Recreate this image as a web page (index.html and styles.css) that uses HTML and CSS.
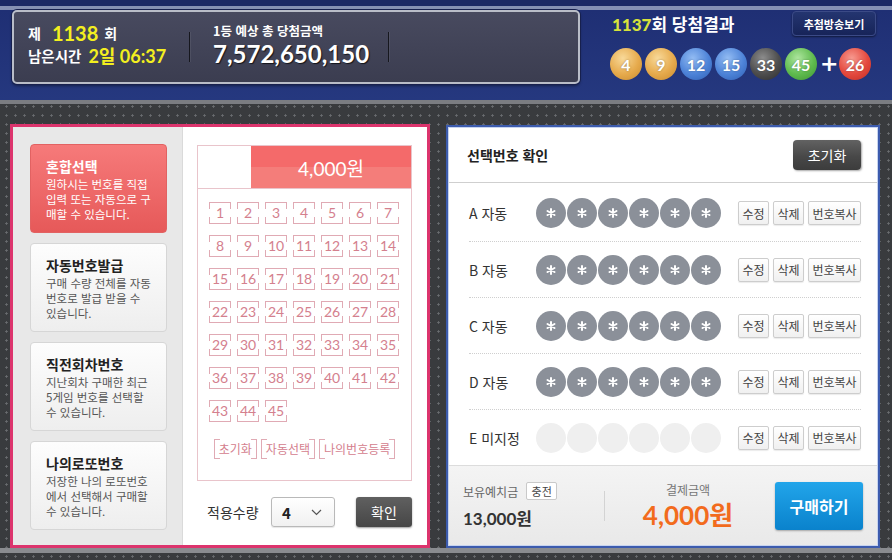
FILE: index.html
```html
<!DOCTYPE html>
<html lang="ko">
<head>
<meta charset="utf-8">
<title>로또 구매</title>
<link rel="stylesheet" href="styles.css">
</head>
<body>
<header class="top">
  <div class="info">
    <div class="ib-left">
      <div class="l1"><span>제</span><span class="num n1">1138</span><span>회</span></div>
      <div class="l2"><span>남은시간</span><span class="num n2">2일 06:37</span></div>
    </div>
    <div class="vline"></div>
    <div class="prize">
      <div class="lab">1등 예상 총 당첨금액</div>
      <div class="amt">7,572,650,150</div>
    </div>
    <div class="vline"></div>
  </div>
  <div class="res">
    <div class="res-head">
      <div class="res-title"><b>1137</b>회 당첨결과</div>
      <div class="live-btn">추첨방송보기</div>
    </div>
    <div class="balls">
      <span class="ball y">4</span>
      <span class="ball y">9</span>
      <span class="ball b">12</span>
      <span class="ball b">15</span>
      <span class="ball g">33</span>
      <span class="ball gr">45</span>
      <span class="plus">+</span>
      <span class="ball r">26</span>
    </div>
  </div>
</header>

<main class="main">
  <section class="lp">
    <div class="menu">
      <div class="mi on"><h3>혼합선택</h3><p>원하시는 번호를 직접<br>입력 또는 자동으로 구<br>매할 수 있습니다.</p></div>
      <div class="mi"><h3>자동번호발급</h3><p>구매 수량 전체를 자동<br>번호로 발급 받을 수<br>있습니다.</p></div>
      <div class="mi"><h3>직전회차번호</h3><p>지난회차 구매한 최근<br>5게임 번호를 선택할<br>수 있습니다.</p></div>
      <div class="mi"><h3>나의로또번호</h3><p>저장한 나의 로또번호<br>에서 선택해서 구매할<br>수 있습니다.</p></div>
    </div>
    <div class="pick">
      <div class="grid-box">
        <div class="gb-head"><div class="gb-blank"></div><div class="gb-price">4,000원</div></div>
        <div class="nums">
          <span class="n">1</span><span class="n">2</span><span class="n">3</span><span class="n">4</span><span class="n">5</span><span class="n">6</span><span class="n">7</span>
          <span class="n">8</span><span class="n">9</span><span class="n">10</span><span class="n">11</span><span class="n">12</span><span class="n">13</span><span class="n">14</span>
          <span class="n">15</span><span class="n">16</span><span class="n">17</span><span class="n">18</span><span class="n">19</span><span class="n">20</span><span class="n">21</span>
          <span class="n">22</span><span class="n">23</span><span class="n">24</span><span class="n">25</span><span class="n">26</span><span class="n">27</span><span class="n">28</span>
          <span class="n">29</span><span class="n">30</span><span class="n">31</span><span class="n">32</span><span class="n">33</span><span class="n">34</span><span class="n">35</span>
          <span class="n">36</span><span class="n">37</span><span class="n">38</span><span class="n">39</span><span class="n">40</span><span class="n">41</span><span class="n">42</span>
          <span class="n">43</span><span class="n">44</span><span class="n">45</span>
        </div>
        <div class="gb-btns"><span>초기화</span><span>자동선택</span><span>나의번호등록</span></div>
      </div>
      <div class="qty">
        <span class="qty-lbl">적용수량</span>
        <div class="sel"><span>4</span><svg width="11" height="7" viewBox="0 0 11 7"><path d="M1 1l4.5 4.5L10 1" fill="none" stroke="#555" stroke-width="1.2"/></svg></div>
        <div class="ok">확인</div>
      </div>
    </div>
  </section>

  <section class="rp">
    <div class="rp-in">
      <div class="rp-head">
        <h2>선택번호 확인</h2>
        <div class="reset">초기화</div>
      </div>
      <div class="rows">
        <div class="row"><span class="lbl">A 자동</span><div class="circles"><span class="c"><svg class="st" viewBox="0 0 12 12"><path d="M6 1.2v9.6M1.8 3.6l8.4 4.8M1.8 8.4l8.4-4.8"/></svg></span><span class="c"><svg class="st" viewBox="0 0 12 12"><path d="M6 1.2v9.6M1.8 3.6l8.4 4.8M1.8 8.4l8.4-4.8"/></svg></span><span class="c"><svg class="st" viewBox="0 0 12 12"><path d="M6 1.2v9.6M1.8 3.6l8.4 4.8M1.8 8.4l8.4-4.8"/></svg></span><span class="c"><svg class="st" viewBox="0 0 12 12"><path d="M6 1.2v9.6M1.8 3.6l8.4 4.8M1.8 8.4l8.4-4.8"/></svg></span><span class="c"><svg class="st" viewBox="0 0 12 12"><path d="M6 1.2v9.6M1.8 3.6l8.4 4.8M1.8 8.4l8.4-4.8"/></svg></span><span class="c"><svg class="st" viewBox="0 0 12 12"><path d="M6 1.2v9.6M1.8 3.6l8.4 4.8M1.8 8.4l8.4-4.8"/></svg></span></div><div class="acts"><span class="a1">수정</span><span class="a1">삭제</span><span class="a2">번호복사</span></div></div>
        <div class="row"><span class="lbl">B 자동</span><div class="circles"><span class="c"><svg class="st" viewBox="0 0 12 12"><path d="M6 1.2v9.6M1.8 3.6l8.4 4.8M1.8 8.4l8.4-4.8"/></svg></span><span class="c"><svg class="st" viewBox="0 0 12 12"><path d="M6 1.2v9.6M1.8 3.6l8.4 4.8M1.8 8.4l8.4-4.8"/></svg></span><span class="c"><svg class="st" viewBox="0 0 12 12"><path d="M6 1.2v9.6M1.8 3.6l8.4 4.8M1.8 8.4l8.4-4.8"/></svg></span><span class="c"><svg class="st" viewBox="0 0 12 12"><path d="M6 1.2v9.6M1.8 3.6l8.4 4.8M1.8 8.4l8.4-4.8"/></svg></span><span class="c"><svg class="st" viewBox="0 0 12 12"><path d="M6 1.2v9.6M1.8 3.6l8.4 4.8M1.8 8.4l8.4-4.8"/></svg></span><span class="c"><svg class="st" viewBox="0 0 12 12"><path d="M6 1.2v9.6M1.8 3.6l8.4 4.8M1.8 8.4l8.4-4.8"/></svg></span></div><div class="acts"><span class="a1">수정</span><span class="a1">삭제</span><span class="a2">번호복사</span></div></div>
        <div class="row"><span class="lbl">C 자동</span><div class="circles"><span class="c"><svg class="st" viewBox="0 0 12 12"><path d="M6 1.2v9.6M1.8 3.6l8.4 4.8M1.8 8.4l8.4-4.8"/></svg></span><span class="c"><svg class="st" viewBox="0 0 12 12"><path d="M6 1.2v9.6M1.8 3.6l8.4 4.8M1.8 8.4l8.4-4.8"/></svg></span><span class="c"><svg class="st" viewBox="0 0 12 12"><path d="M6 1.2v9.6M1.8 3.6l8.4 4.8M1.8 8.4l8.4-4.8"/></svg></span><span class="c"><svg class="st" viewBox="0 0 12 12"><path d="M6 1.2v9.6M1.8 3.6l8.4 4.8M1.8 8.4l8.4-4.8"/></svg></span><span class="c"><svg class="st" viewBox="0 0 12 12"><path d="M6 1.2v9.6M1.8 3.6l8.4 4.8M1.8 8.4l8.4-4.8"/></svg></span><span class="c"><svg class="st" viewBox="0 0 12 12"><path d="M6 1.2v9.6M1.8 3.6l8.4 4.8M1.8 8.4l8.4-4.8"/></svg></span></div><div class="acts"><span class="a1">수정</span><span class="a1">삭제</span><span class="a2">번호복사</span></div></div>
        <div class="row"><span class="lbl">D 자동</span><div class="circles"><span class="c"><svg class="st" viewBox="0 0 12 12"><path d="M6 1.2v9.6M1.8 3.6l8.4 4.8M1.8 8.4l8.4-4.8"/></svg></span><span class="c"><svg class="st" viewBox="0 0 12 12"><path d="M6 1.2v9.6M1.8 3.6l8.4 4.8M1.8 8.4l8.4-4.8"/></svg></span><span class="c"><svg class="st" viewBox="0 0 12 12"><path d="M6 1.2v9.6M1.8 3.6l8.4 4.8M1.8 8.4l8.4-4.8"/></svg></span><span class="c"><svg class="st" viewBox="0 0 12 12"><path d="M6 1.2v9.6M1.8 3.6l8.4 4.8M1.8 8.4l8.4-4.8"/></svg></span><span class="c"><svg class="st" viewBox="0 0 12 12"><path d="M6 1.2v9.6M1.8 3.6l8.4 4.8M1.8 8.4l8.4-4.8"/></svg></span><span class="c"><svg class="st" viewBox="0 0 12 12"><path d="M6 1.2v9.6M1.8 3.6l8.4 4.8M1.8 8.4l8.4-4.8"/></svg></span></div><div class="acts"><span class="a1">수정</span><span class="a1">삭제</span><span class="a2">번호복사</span></div></div>
        <div class="row"><span class="lbl">E 미지정</span><div class="circles"><span class="c empty"></span><span class="c empty"></span><span class="c empty"></span><span class="c empty"></span><span class="c empty"></span><span class="c empty"></span></div><div class="acts"><span class="a1">수정</span><span class="a1">삭제</span><span class="a2">번호복사</span></div></div>
      </div>
      <div class="rp-foot">
        <div class="hold">
          <div class="hold-top"><span>보유예치금</span><span class="charge">충전</span></div>
          <div class="hold-amt">13,000원</div>
        </div>
        <div class="fdiv"></div>
        <div class="pay">
          <div class="pay-lbl">결제금액</div>
          <div class="pay-amt">4,000원</div>
        </div>
        <div class="buy">구매하기</div>
      </div>
    </div>
  </section>
</main>
<div class="band"></div>
</body>
</html>
```

FILE: styles.css
```css
* { box-sizing: border-box; margin: 0; padding: 0; }
body {
  width: 892px; height: 560px; overflow: hidden;
  font-family: "Noto Sans CJK KR", "Noto Sans", sans-serif;
  background-color: #393b3e;
  background-image: radial-gradient(circle, #6a6c70 0 0.9px, transparent 1.4px);
  background-size: 9px 9px;
  background-position: 2px 3px;
}

/* header */
.top {
  height: 104px;
  display: flex; align-items: flex-start;
  background: linear-gradient(#1b2864 0, #1b2864 6px, #8590b3 6px, #8590b3 10px, #1f2f74 10px, #25387f 100%);
  border-bottom: 4px solid #7b7d82;
}
.info {
  margin: 10px 0 0 12px;
  width: 568px; height: 74px;
  border: 2px solid #b9bdc8; border-radius: 5px;
  background: linear-gradient(#484a5f, #3b3d50);
  box-shadow: 0 0 0 1px #17204e, 0 2px 3px rgba(0,0,0,.4);
  display: flex; align-items: center;
}
.ib-left { width: 175px; padding-left: 14px; padding-bottom: 6px; color: #fff; font-weight: 700; }
.l1, .l2 { display: flex; align-items: center; font-size: 14px; height: 23px; white-space: nowrap; }
.l2 { font-size: 14.5px; }
.num { font-family: Lato, "Noto Sans CJK KR", sans-serif; color: #f3ef1f; font-weight: 700; line-height: 1; }
.n1 { font-size: 20px; margin: 0 6px 0 11px; }
.n2 { font-size: 18px; margin-left: 7px; }
.vline { width: 1px; height: 30px; background: #16171e; box-shadow: 1px 0 0 rgba(255,255,255,.07); }
.prize { width: 198px; padding-left: 23px; padding-bottom: 4px; color: #fff; white-space: nowrap; }
.prize .lab { font-size: 12.5px; font-weight: 700; line-height: 18px; }
.prize .amt { font-family: Lato, sans-serif; font-size: 24px; font-weight: 700; line-height: 28px; text-shadow: 1px 1px 1px rgba(0,0,0,.7); }

.res { margin-left: 30px; width: 266px; }
.res-head { display: flex; justify-content: space-between; align-items: center; margin-top: 11px; height: 25px; }
.res-title { font-size: 17px; font-weight: 700; color: #fff; padding-left: 2px; white-space: nowrap; }
.res-title b { color: #d7e23b; font-family: Lato, sans-serif; }
.live-btn {
  width: 84px; height: 25px;
  background: linear-gradient(#243570, #172459);
  border: 1px solid #3b4a86; border-radius: 4px;
  color: #fff; font-size: 11px; font-weight: 700;
  display: flex; align-items: center; justify-content: center;
  box-shadow: 0 1px 2px rgba(0,0,0,.5);
}
.balls { display: flex; align-items: center; gap: 3px; margin-top: 12px; }
.ball {
  width: 32px; height: 32px; border-radius: 50%;
  color: #fff; font-family: Lato, sans-serif; font-weight: 700; font-size: 16px;
  display: flex; align-items: center; justify-content: center;
  text-shadow: 0 0 2px rgba(0,0,0,.35);
}
.ball.y { background: radial-gradient(circle at 40% 32%, #f8d999, #e6aa4c 55%, #c88a2e); }
.ball.b { background: radial-gradient(circle at 40% 32%, #93bcf3, #4d83d8 55%, #2f5eb2); }
.ball.g { background: radial-gradient(circle at 40% 32%, #8d8d8d, #4d4d4d 55%, #2c2c2c); }
.ball.gr { background: radial-gradient(circle at 40% 32%, #ade59e, #5fbb4e 55%, #3c9231); }
.ball.r { background: radial-gradient(circle at 40% 32%, #f79a90, #e4493e 55%, #c02c23); }
.plus { width: 16px; text-align: center; color: #fff; font-size: 22px; font-weight: 700; line-height: 32px; font-family: "DejaVu Sans", sans-serif; }

/* main */
.main { display: flex; align-items: flex-start; height: 444px; padding: 20px 0 0 10px; }
.lp {
  width: 420px; height: 424px;
  border: 3px solid #dc346d;
  display: flex; background: #fff;
}
.menu {
  width: 170px; background: #e8e8e8; border-right: 1px solid #dadada;
  padding: 17px 0 0 17px;
  display: flex; flex-direction: column; gap: 10px;
}
.mi {
  width: 137px; height: 89px;
  border: 1px solid #d6d6d6; border-radius: 4px;
  background: linear-gradient(#fdfdfd, #eeeeee);
  padding: 11px 0 0 15px;
  white-space: nowrap;
}
.mi h3 { font-size: 14px; font-weight: 700; color: #222; line-height: 20px; margin-bottom: 1px; }
.mi p { font-size: 11.5px; color: #555; line-height: 15px; }
.mi.on { background: linear-gradient(#f67a7a, #e65959); border-color: #e26262; }
.mi.on h3, .mi.on p { color: #fff; }

.pick { flex: 1; padding: 18px 0 0 14px; }
.grid-box { width: 215px; height: 336px; border: 1px solid #e9c4cb; }
.gb-head { display: flex; height: 43px; border-bottom: 1px solid #e9c4cb; }
.gb-blank { width: 53px; }
.gb-price {
  flex: 1;
  background: linear-gradient(#f46a6a 0, #f46a6a 50%, #f47d7a 50%, #f47d7a 100%);
  color: #fff; font-family: Lato, "Noto Sans CJK KR", sans-serif; font-size: 19px;
  display: flex; align-items: center; justify-content: center;
}
.nums {
  display: grid; grid-template-columns: repeat(7, 22px);
  column-gap: 6px; row-gap: 11px;
  padding: 13px 0 0 11px;
}
.n {
  width: 22px; height: 22px;
  border-top: 1px solid #e0aab4; border-bottom: 1px solid #e0aab4;
  background:
    linear-gradient(#e0aab4, #e0aab4) left top / 1px 6px no-repeat,
    linear-gradient(#e0aab4, #e0aab4) right top / 1px 6px no-repeat,
    linear-gradient(#e0aab4, #e0aab4) left bottom / 1px 6px no-repeat,
    linear-gradient(#e0aab4, #e0aab4) right bottom / 1px 6px no-repeat;
  font-family: Lato, sans-serif; font-size: 14px; color: #d4808e;
  text-align: center; line-height: 20px;
}
.gb-btns { display: flex; justify-content: center; gap: 4px; margin-top: 17px; }
.gb-btns span {
  height: 20px; line-height: 19px; padding: 0 4px;
  font-size: 12px; color: #d4808e; white-space: nowrap;
  border-left: 1px solid #e0aab4; border-right: 1px solid #e0aab4;
  background:
    linear-gradient(#e0aab4, #e0aab4) left top / 5px 1px no-repeat,
    linear-gradient(#e0aab4, #e0aab4) right top / 5px 1px no-repeat,
    linear-gradient(#e0aab4, #e0aab4) left bottom / 5px 1px no-repeat,
    linear-gradient(#e0aab4, #e0aab4) right bottom / 5px 1px no-repeat;
}
.qty { display: flex; align-items: center; margin-top: 16px; padding-left: 10px; }
.qty-lbl { font-size: 14px; color: #333; width: 64px; }
.sel {
  width: 64px; height: 30px;
  border: 1px solid #b9b9b9; border-radius: 3px;
  background: linear-gradient(#fff, #f1f1f1);
  display: flex; align-items: center; justify-content: space-between;
  padding: 0 12px 0 10px;
  font-size: 15px; font-weight: 700; color: #222;
  box-shadow: 0 1px 1px rgba(0,0,0,.1);
}
.ok {
  margin-left: 21px; width: 56px; height: 30px;
  background: linear-gradient(#606060, #464646);
  border-radius: 3px; color: #fff; font-size: 14px;
  display: flex; align-items: center; justify-content: center;
  box-shadow: 0 1px 2px rgba(0,0,0,.4);
}

/* right panel */
.rp {
  margin: 1px 0 0 16px;
  width: 434px; height: 423px;
  border: 2px solid #3c5bad;
  background: #c6d3ef; padding: 1px;
}
.rp-in { height: 100%; background: #fff; display: flex; flex-direction: column; }
.rp-head {
  height: 55px; flex: none;
  display: flex; align-items: center; justify-content: space-between;
  padding: 0 16px 0 18px;
  border-bottom: 1px solid #cfcfcf;
}
.rp-head h2 { font-size: 14px; font-weight: 700; color: #222; }
.reset {
  width: 68px; height: 30px;
  background: linear-gradient(#626262, #484848 55%, #3c3c3c);
  border-radius: 4px; color: #fff; font-size: 14px;
  display: flex; align-items: center; justify-content: center;
  box-shadow: 1px 1px 2px rgba(0,0,0,.35);
}
.rows { padding-top: 2px; flex: none; }
.row { height: 56px; margin: 0 16px 0 20px; display: flex; align-items: center; }
.row + .row { border-top: 1px dotted #cfcfcf; }
.lbl { width: 67px; font-size: 14px; color: #333; white-space: nowrap; }
.circles { display: flex; gap: 1px; }
.c {
  width: 30px; height: 30px; border-radius: 50%;
  background: #8b9099;
  display: flex; align-items: center; justify-content: center;
}
.c.empty { background: #efefef; }
.st { width: 10px; height: 10px; fill: none; stroke: #fff; stroke-width: 2.4; stroke-linecap: round; }
.acts { display: flex; gap: 4px; margin-left: 17px; }
.acts span {
  height: 24px;
  border: 1px solid #cdcdcd; border-radius: 2px;
  background: linear-gradient(#fff, #f0f0f0);
  font-size: 12px; color: #444; white-space: nowrap;
  display: flex; align-items: center; justify-content: center;
  box-shadow: 0 1px 1px rgba(0,0,0,.08);
}
.acts .a1 { width: 31px; }
.acts .a2 { width: 53px; }

.rp-foot {
  flex: 1;
  background: linear-gradient(#f4f4f4, #e9e9e9);
  border-top: 1px solid #dcdcdc;
  display: flex; align-items: center;
  padding-left: 14px;
}
.hold { width: 141px; }
.hold-top { display: flex; align-items: center; gap: 8px; height: 18px; font-size: 12px; color: #666; }
.charge {
  width: 31px; height: 18px;
  border: 1px solid #c9c9c9; border-radius: 2px; background: #fff;
  font-size: 11px; color: #444;
  display: flex; align-items: center; justify-content: center;
}
.hold-amt { margin-top: 9px; font-family: Lato, "Noto Sans CJK KR", sans-serif; font-size: 17px; font-weight: 700; color: #333; line-height: 20px; }
.fdiv { width: 1px; height: 30px; background: #d3d3d3; }
.pay { width: 166px; text-align: center; }
.pay-lbl { font-size: 12px; color: #777; line-height: 18px; }
.pay-amt { font-family: Lato, "Noto Sans CJK KR", sans-serif; font-size: 26px; font-weight: 700; color: #f26b1d; line-height: 32px; }
.buy {
  margin-left: 4px; width: 88px; height: 48px;
  background: linear-gradient(#22a5ea, #0a82cc);
  border-radius: 3px; color: #fff; font-size: 16px; font-weight: 700;
  display: flex; align-items: center; justify-content: center;
  box-shadow: 0 1px 2px rgba(0,0,0,.3);
}

.band { height: 5px; background: #8a8c90; }
```
